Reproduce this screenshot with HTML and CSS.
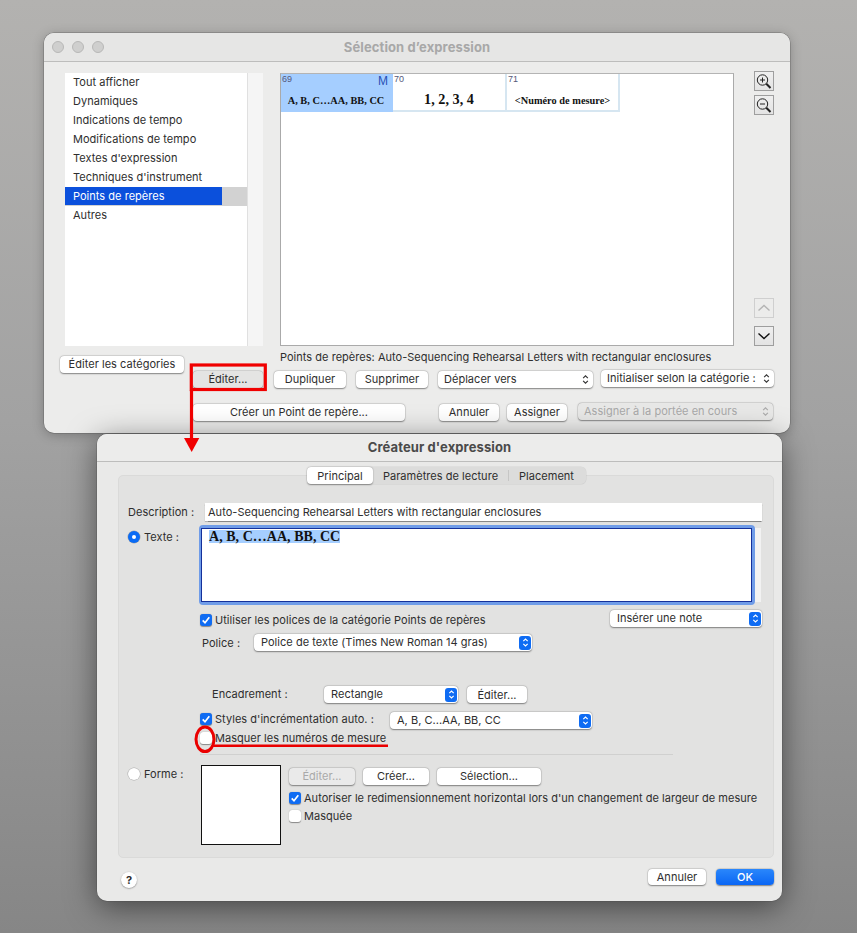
FILE: index.html
```html
<!DOCTYPE html>
<html lang="fr">
<head>
<meta charset="utf-8">
<title>Sélection d'expression</title>
<link rel="stylesheet" href="styles.css">
</head>
<body>
<div class="desktop">

<section class="window win-select">
  <header class="titlebar">
    <div class="lights"><i></i><i></i><i></i></div>
    <h1 class="title title-inactive">Sélection d’expression</h1>
  </header>
  <div class="select-main">
    <div class="cat-list">
      <ul class="cats">
        <li>Tout afficher</li>
        <li>Dynamiques</li>
        <li>Indications de tempo</li>
        <li>Modifications de tempo</li>
        <li>Textes d'expression</li>
        <li>Techniques d'instrument</li>
        <li class="cat-sel"><span>Points de repères</span></li>
        <li>Autres</li>
      </ul>
      <div class="cat-track"></div>
    </div>
    <div class="preview">
      <div class="cell cell-sel">
        <div class="cell-top"><span class="cell-num">69</span><span class="cell-m">M</span></div>
        <div class="cell-text">A, B, C…AA, BB, CC</div>
      </div>
      <div class="cell cell-mid">
        <div class="cell-top"><span class="cell-num">70</span></div>
        <div class="cell-text cell-big">1, 2, 3, 4</div>
      </div>
      <div class="cell">
        <div class="cell-top"><span class="cell-num">71</span></div>
        <div class="cell-text">&lt;Numéro de mesure&gt;</div>
      </div>
    </div>
    <div class="side">
      <div class="side-top">
        <button class="sq">
          <svg viewBox="0 0 18 18" width="18" height="18"><circle cx="7.500" cy="8" r="5.200" fill="none" stroke="#222" stroke-width="1"/><path d="M5 8h5M7.500 5.500v5" stroke="#222" stroke-width="1"/><path d="M11.300 11.800l4.200 4.200" stroke="#222" stroke-width="2"/></svg>
        </button>
        <button class="sq">
          <svg viewBox="0 0 18 18" width="18" height="18"><circle cx="7.500" cy="8" r="5.200" fill="none" stroke="#222" stroke-width="1"/><path d="M5 8h5" stroke="#222" stroke-width="1"/><path d="M11.300 11.800l4.200 4.200" stroke="#222" stroke-width="2"/></svg>
        </button>
      </div>
      <div class="side-bottom">
        <button class="sq sq-off">
          <svg viewBox="0 0 18 18" width="18" height="18"><path d="M3.500 11.500L9 6.500l5.500 5" fill="none" stroke="#b4b4b4" stroke-width="1.400"/></svg>
        </button>
        <button class="sq">
          <svg viewBox="0 0 18 18" width="18" height="18"><path d="M3.500 6.500L9 11.500l5.500-5" fill="none" stroke="#111" stroke-width="1.400"/></svg>
        </button>
      </div>
    </div>
  </div>
  <div class="select-lower">
    <div class="lower-left">
      <button class="btn btn-cats">Éditer les catégories</button>
    </div>
    <div class="lower-right">
      <p class="status">Points de repères: Auto-Sequencing Rehearsal Letters with rectangular enclosures</p>
      <div class="row-actions">
        <button class="btn btn-edit">Éditer...</button>
        <button class="btn btn-dup">Dupliquer</button>
        <button class="btn btn-sup">Supprimer</button>
        <div class="sel sel-move"><span>Déplacer vers</span><svg class="updown" viewBox="0 0 8 12" width="7" height="11"><path d="M1.300 4.500L4 1.800l2.700 2.700M1.300 7.500L4 10.200l2.700-2.700" fill="none" stroke="#333" stroke-width="1.300"/></svg></div>
        <div class="sel sel-init"><span>Initialiser selon la catégorie :</span><svg class="updown" viewBox="0 0 8 12" width="7" height="11"><path d="M1.300 4.500L4 1.800l2.700 2.700M1.300 7.500L4 10.200l2.700-2.700" fill="none" stroke="#333" stroke-width="1.300"/></svg></div>
      </div>
      <div class="row-create">
        <button class="btn btn-create">Créer un Point de repère...</button>
        <button class="btn btn-cancel1">Annuler</button>
        <button class="btn btn-assign">Assigner</button>
        <div class="sel sel-off"><span>Assigner à la portée en cours</span><svg class="updown" viewBox="0 0 8 12" width="7" height="11"><path d="M1.300 4.500L4 1.800l2.700 2.700M1.300 7.500L4 10.200l2.700-2.700" fill="none" stroke="#aaa" stroke-width="1.300"/></svg></div>
      </div>
    </div>
  </div>
</section>

<section class="window win-create">
  <header class="titlebar titlebar-create">
    <h2 class="title">Créateur d'expression</h2>
  </header>
  <div class="create-body">
    <div class="panel">
      <div class="tabs">
        <span class="tab tab-on">Principal</span>
        <span class="tab tab-mid">Paramètres de lecture</span>
        <span class="tab">Placement</span>
      </div>
      <div class="row r-desc">
        <label class="lbl lbl-desc">Description :</label>
        <div class="input">Auto-Sequencing Rehearsal Letters with rectangular enclosures</div>
      </div>
      <div class="row r-text">
        <div class="radio-col"><i class="radio radio-on"></i><label class="lbl">Texte :</label></div>
        <div class="ring"><div class="area"><span class="hl">A, B, C…AA, BB, CC</span></div></div>
        <div class="area-track"></div>
      </div>
      <div class="row r-use">
        <i class="cb cb-on"><svg viewBox="0 0 12 12" width="12" height="12"><path d="M2.700 6.300l2.300 2.500 4.300-5.600" fill="none" stroke="#fff" stroke-width="1.700"/></svg></i>
        <label class="lbl cb-lbl">Utiliser les polices de la catégorie Points de repères</label>
        <div class="sel sel-blue sel-note"><span>Insérer une note</span><b class="arrows"><svg viewBox="0 0 8 12" width="7" height="11"><path d="M1.500 4.500L4 2l2.500 2.500M1.500 7.500L4 10l2.500-2.500" fill="none" stroke="#fff" stroke-width="1.300"/></svg></b></div>
      </div>
      <div class="row r-font">
        <label class="lbl lbl-font">Police :</label>
        <div class="sel sel-blue sel-font"><span>Police de texte (Times New Roman 14 gras)</span><b class="arrows"><svg viewBox="0 0 8 12" width="7" height="11"><path d="M1.500 4.500L4 2l2.500 2.500M1.500 7.500L4 10l2.500-2.500" fill="none" stroke="#fff" stroke-width="1.300"/></svg></b></div>
      </div>
      <div class="row r-frame">
        <label class="lbl lbl-frame">Encadrement :</label>
        <div class="sel sel-blue sel-rect"><span>Rectangle</span><b class="arrows"><svg viewBox="0 0 8 12" width="7" height="11"><path d="M1.500 4.500L4 2l2.500 2.500M1.500 7.500L4 10l2.500-2.500" fill="none" stroke="#fff" stroke-width="1.300"/></svg></b></div>
        <button class="btn btn-frame">Éditer...</button>
      </div>
      <div class="row r-auto">
        <i class="cb cb-on"><svg viewBox="0 0 12 12" width="12" height="12"><path d="M2.700 6.300l2.300 2.500 4.300-5.600" fill="none" stroke="#fff" stroke-width="1.700"/></svg></i>
        <label class="lbl cb-lbl lbl-auto">Styles d'incrémentation auto. :</label>
        <div class="sel sel-blue sel-abc"><span>A, B, C...AA, BB, CC</span><b class="arrows"><svg viewBox="0 0 8 12" width="7" height="11"><path d="M1.500 4.500L4 2l2.500 2.500M1.500 7.500L4 10l2.500-2.500" fill="none" stroke="#fff" stroke-width="1.300"/></svg></b></div>
      </div>
      <div class="row r-hide">
        <i class="cb"></i>
        <label class="lbl cb-lbl">Masquer les numéros de mesure</label>
      </div>
      <div class="sep"></div>
      <div class="row r-shape">
        <div class="radio-col radio-col-shape"><i class="radio"></i><label class="lbl">Forme :</label></div>
        <div class="shape-box"></div>
        <div class="shape-ctrl">
          <div class="shape-btns">
            <button class="btn btn-off">Éditer...</button>
            <button class="btn btn-make">Créer...</button>
            <button class="btn btn-pick">Sélection...</button>
          </div>
          <div class="row r-allow">
            <i class="cb cb-on"><svg viewBox="0 0 12 12" width="12" height="12"><path d="M2.700 6.300l2.300 2.500 4.300-5.600" fill="none" stroke="#fff" stroke-width="1.700"/></svg></i>
            <label class="lbl cb-lbl">Autoriser le redimensionnement horizontal lors d'un changement de largeur de mesure</label>
          </div>
          <div class="row r-masked">
            <i class="cb"></i>
            <label class="lbl cb-lbl">Masquée</label>
          </div>
        </div>
      </div>
    </div>
    <div class="create-foot">
      <button class="help">?</button>
      <div class="foot-btns">
        <button class="btn btn-foot">Annuler</button>
        <button class="btn btn-foot btn-ok">OK</button>
      </div>
    </div>
  </div>
</section>

<svg class="marks" viewBox="0 0 857 933" width="857" height="933">
  <rect x="191.300" y="365" width="74" height="24.500" fill="none" stroke="#f00000" stroke-width="3.200"/>
  <path d="M191.500 390v50" stroke="#f00000" stroke-width="3.200" fill="none"/>
  <path d="M184 438h15.300l-7.600 14z" fill="#f00000"/>
  <ellipse cx="205" cy="739.300" rx="9" ry="12.300" fill="none" stroke="#ea0000" stroke-width="3"/>
  <path d="M213 745.800h175" stroke="#ea0000" stroke-width="2.500" fill="none"/>
</svg>
</div>
</body>
</html>
```
FILE: styles.css
```css
* { box-sizing: border-box; }
html, body { margin: 0; padding: 0; }
body { width: 857px; height: 933px; overflow: hidden; font-family: "Inter", "Liberation Sans", sans-serif; font-size: 11px; color: #2e2e2e; letter-spacing: .03px; }
.desktop { position: relative; width: 857px; height: 933px; overflow: hidden; background: linear-gradient(180deg, #b3b2b0 0%, #a2a2a2 45%, #8e8e8e 85%, #868686 100%); }
.window { position: absolute; border-radius: 10px; background: #ececeb; }
.win-select { left: 44px; top: 33px; width: 746px; height: 400px; box-shadow: 0 0 0 .5px rgba(70,70,70,.5), 0 2px 12px rgba(0,0,0,.25); }
.win-create { left: 97px; top: 434px; width: 685px; height: 467px; background: #e9e9e8; box-shadow: 0 0 0 .5px rgba(70,70,70,.5), 0 6px 30px rgba(0,0,0,.5); }
.titlebar { position: relative; height: 29px; border-bottom: 1px solid #bdbdbc; background: #e6e6e5; border-radius: 10px 10px 0 0; display: flex; align-items: center; justify-content: center; padding-bottom: 1px; }
.titlebar-create { height: 28px; background: #ececeb; padding-bottom: 2px; }
.lights { position: absolute; left: 8px; top: 8px; display: flex; gap: 8px; }
.lights i { width: 12px; height: 12px; border-radius: 50%; background: #cfcfce; border: 1px solid #b8b8b7; }
.title { margin: 0; font-size: 13px; font-weight: 700; color: #4a4a4a; letter-spacing: .1px; }
.title-inactive { color: #a8a8a8; }
button { font: inherit; color: inherit; letter-spacing: inherit; margin: 0; padding: 0; }

.select-main { display: flex; padding: 11px 0 0 21px; height: 284px; }
.cat-list { display: flex; width: 198px; height: 273px; }
.cats { list-style: none; margin: 0; padding: 0; width: 183px; background: #fff; border-right: 1px solid #e0e0e0; }
.cats li { height: 19px; line-height: 18px; padding-left: 8px; }
.cats .cat-sel { background: #d2d2d2; padding: 0; }
.cat-sel span { display: block; width: 157px; height: 18px; background: #0b50dc; color: #fff; padding-left: 8px; }
.cat-track { width: 15px; background: #f5f5f5; }
.preview { display: flex; align-items: flex-start; width: 454px; height: 273px; margin-left: 17px; background: #fff; border: 1px solid #aaa; border-top-color: #b4b4b4; }
.cell { width: 113px; height: 38px; border-right: 2px solid #d6e6f1; border-bottom: 2px solid #d6e6f1; font-family: "Liberation Serif", serif; color: #111; }
.cell-sel { width: 112px; background: #a5ceff; border-color: #a5ceff; }
.cell-mid { width: 114px; }
.cell-top { display: flex; justify-content: space-between; height: 11px; font-family: "Liberation Sans", sans-serif; }
.cell-num { font-size: 9px; line-height: 10px; color: #55587a; padding-left: 1px; }
.cell-m { font-size: 12px; line-height: 15px; color: #2850b4; padding-right: 3px; }
.cell-text { text-align: center; font-weight: 700; font-size: 10.300px; line-height: 12px; padding-top: 10px; }
.cell-big { font-size: 14.200px; line-height: 16px; padding-top: 6px; }
.side { display: flex; flex-direction: column; justify-content: space-between; margin-left: 20px; height: 275px; margin-top: -2px; }
.side-top, .side-bottom { display: flex; flex-direction: column; }
.side-top { gap: 4px; }
.side-bottom { gap: 8px; }
.sq { width: 20px; height: 20px; border: 1px solid #9e9e9e; background: linear-gradient(#efefef, #e3e3e3); display: flex; align-items: center; justify-content: center; }
.sq-off { border-color: #cfcfcf; background: #ececeb; }

.btn { height: 17px; background: #fff; border: 0; border-radius: 4px; box-shadow: 0 0.500px 1.500px rgba(0,0,0,.42), 0 0 0 .5px rgba(0,0,0,.08); text-align: center; line-height: 17px; color: #2e2e2e; }
.select-lower { display: flex; }
.lower-left { width: 149px; padding: 10px 0 0 16px; }
.btn-cats { width: 124px; }
.lower-right { flex: 1; }
.status { margin: 0; padding: 4px 0 0 87px; height: 19px; line-height: 15px; white-space: nowrap; }
.row-actions { display: flex; align-items: flex-start; margin-top: 6px; }
.btn-edit { width: 70px; background: #e4e4e3; margin-right: 11px; }
.btn-dup { width: 72px; margin-right: 10px; }
.btn-sup { width: 72px; margin-right: 10px; }
.sel { display: flex; align-items: center; justify-content: space-between; height: 17px; background: #fff; border-radius: 4px; box-shadow: 0 0.500px 1.500px rgba(0,0,0,.42), 0 0 0 .5px rgba(0,0,0,.08); padding: 0 4px 0 6px; white-space: nowrap; }
.sel span { margin-top: -1px; line-height: 15px; }
.sel-init span { margin-top: 0; }
.sel-move { width: 155px; margin-right: 8px; }
.sel-init { width: 173px; margin-top: -1px; }
.row-create { display: flex; align-items: flex-start; margin-top: 16px; }
.btn-create { width: 212px; margin-right: 34px; }
.btn-cancel1 { width: 60px; margin-right: 8px; }
.btn-assign { width: 60px; margin-right: 11px; }
.sel-off { width: 195px; margin-top: -1px; color: #a9a9a9; background: #e8e8e7; }

.create-body { padding: 0 8px 0 21px; }
.panel { position: relative; width: 656px; height: 383px; margin-top: 13px; background: #e2e2e1; border: 1px solid #dadad9; border-radius: 5px; padding: 0 0 0 9px; }
.tabs { position: absolute; left: 188px; top: -9px; width: 279px; height: 17px; display: flex; align-items: center; background: #dcdcdb; border-radius: 5px; box-shadow: 0 0 0 .5px rgba(0,0,0,.08); }
.tab { display: block; text-align: center; line-height: 19px; }
.tab:nth-child(1) { width: 66px; }
.tab:nth-child(2) { width: 136px; }
.tab:nth-child(3) { flex: 1; height: 17px; padding-right: 2px; }
.tab-on { background: #fff; height: 17px; border-radius: 4px; box-shadow: 0 .5px 1.500px rgba(0,0,0,.4); }
.tab-mid { border-right: 1px solid #c6c6c5; height: 11px; line-height: 13px; }
.row { display: flex; align-items: flex-start; }
.lbl { display: block; white-space: nowrap; line-height: 14px; }
.r-desc { padding-top: 27px; height: 44px; }
.lbl-desc { width: 77px; line-height: 18px; }
.input { width: 557px; height: 18px; line-height: 19px; background: #fff; padding-left: 3px; box-shadow: 0 .5px 1px rgba(0,0,0,.4); }
.r-text { margin-top: 5px; height: 80px; }
.radio-col { display: flex; align-items: center; gap: 4px; width: 71px; padding-top: 5px; }
.radio { display: block; width: 12px; height: 12px; border-radius: 50%; background: #fff; box-shadow: 0 0 0 .5px rgba(0,0,0,.25); flex: none; }
.radio-on { background: #0a6bf5; position: relative; }
.radio-on::after { content: ""; position: absolute; left: 4px; top: 4px; width: 4px; height: 4px; border-radius: 50%; background: #fff; }
.ring { width: 556px; height: 80px; padding: 3px 3px 3px 2px; background: #6f9ce8; border-radius: 4px; }
.area { width: 551px; height: 74px; background: #fff; border: 1px solid #14309a; padding: 1px 0 0 7px; font-family: "Liberation Serif", serif; font-weight: 700; font-size: 14px; line-height: 13px; color: #111; }
.hl { background: #a5ceff; display: inline-block; }
.area-track { width: 6px; height: 74px; margin-top: 3px; background: #f2f2f2; }
.cb { display: flex; flex: none; width: 12px; height: 12px; border-radius: 3px; background: #fff; box-shadow: 0 .5px 1px rgba(0,0,0,.4); }
.cb-on { background: #0f6cf3; }
.cb-lbl { margin-left: 3px; line-height: 12px; }
.r-use { margin-top: 9px; padding-left: 72px; height: 20px; position: relative; }
.sel-blue { padding: 0 1px 0 7px; }
.sel-blue .arrows { display: flex; align-items: center; justify-content: center; width: 12px; height: 14px; border-radius: 3px; background: #0f6cf3; }
.sel-note { position: absolute; left: 482px; top: -4px; width: 152px; }
.r-font { height: 17px; }
.lbl-font { width: 126px; padding-left: 74px; line-height: 18px; }
.sel-font { width: 278px; }
.r-frame { margin-top: 35px; height: 17px; }
.lbl-frame { width: 196px; padding-left: 84px; line-height: 16px; }
.sel-rect { width: 134px; margin-right: 9px; }
.btn-frame { width: 60px; line-height: 18px; }
.r-auto { margin-top: 9px; padding-left: 72px; height: 17px; }
.r-auto .cb, .r-auto .cb-lbl { margin-top: 1px; }
.lbl-auto { width: 175px; }
.sel-abc { width: 202px; }
.r-hide { margin-top: 3px; padding-left: 72px; height: 12px; }
.sep { width: 473px; height: 1px; background: #d0d0cf; margin: 10px 0 0 72px; }
.r-shape { margin-top: 10px; }
.radio-col-shape { width: 73px; padding-top: 2px; }
.shape-box { width: 80px; height: 80px; background: #fff; border: 1px solid #111; }
.shape-ctrl { margin-left: 8px; padding-top: 3px; }
.shape-btns { display: flex; gap: 8px; }
.btn-off { width: 66px; background: #eaeaea; color: #a9a9a9; }
.btn-make { width: 66px; }
.btn-pick { width: 104px; }
.r-allow { margin-top: 7px; }
.r-masked { margin-top: 6px; }
.create-foot { display: flex; justify-content: space-between; align-items: flex-start; padding-top: 11px; width: 653px; margin-left: 3px; }
.help { width: 16px; height: 16px; margin-top: 3px; border: 0; border-radius: 50%; background: #fff; box-shadow: 0 .5px 1.500px rgba(0,0,0,.45); font-size: 11px; font-weight: 700; line-height: 16px; }
.foot-btns { display: flex; gap: 10px; }
.btn-foot { width: 58px; height: 16px; line-height: 16px; }
.btn-ok { background: linear-gradient(#2a87fb, #0a66f4); color: #fff; font-weight: 500; }
.marks { position: absolute; left: 0; top: 0; pointer-events: none; }
```
